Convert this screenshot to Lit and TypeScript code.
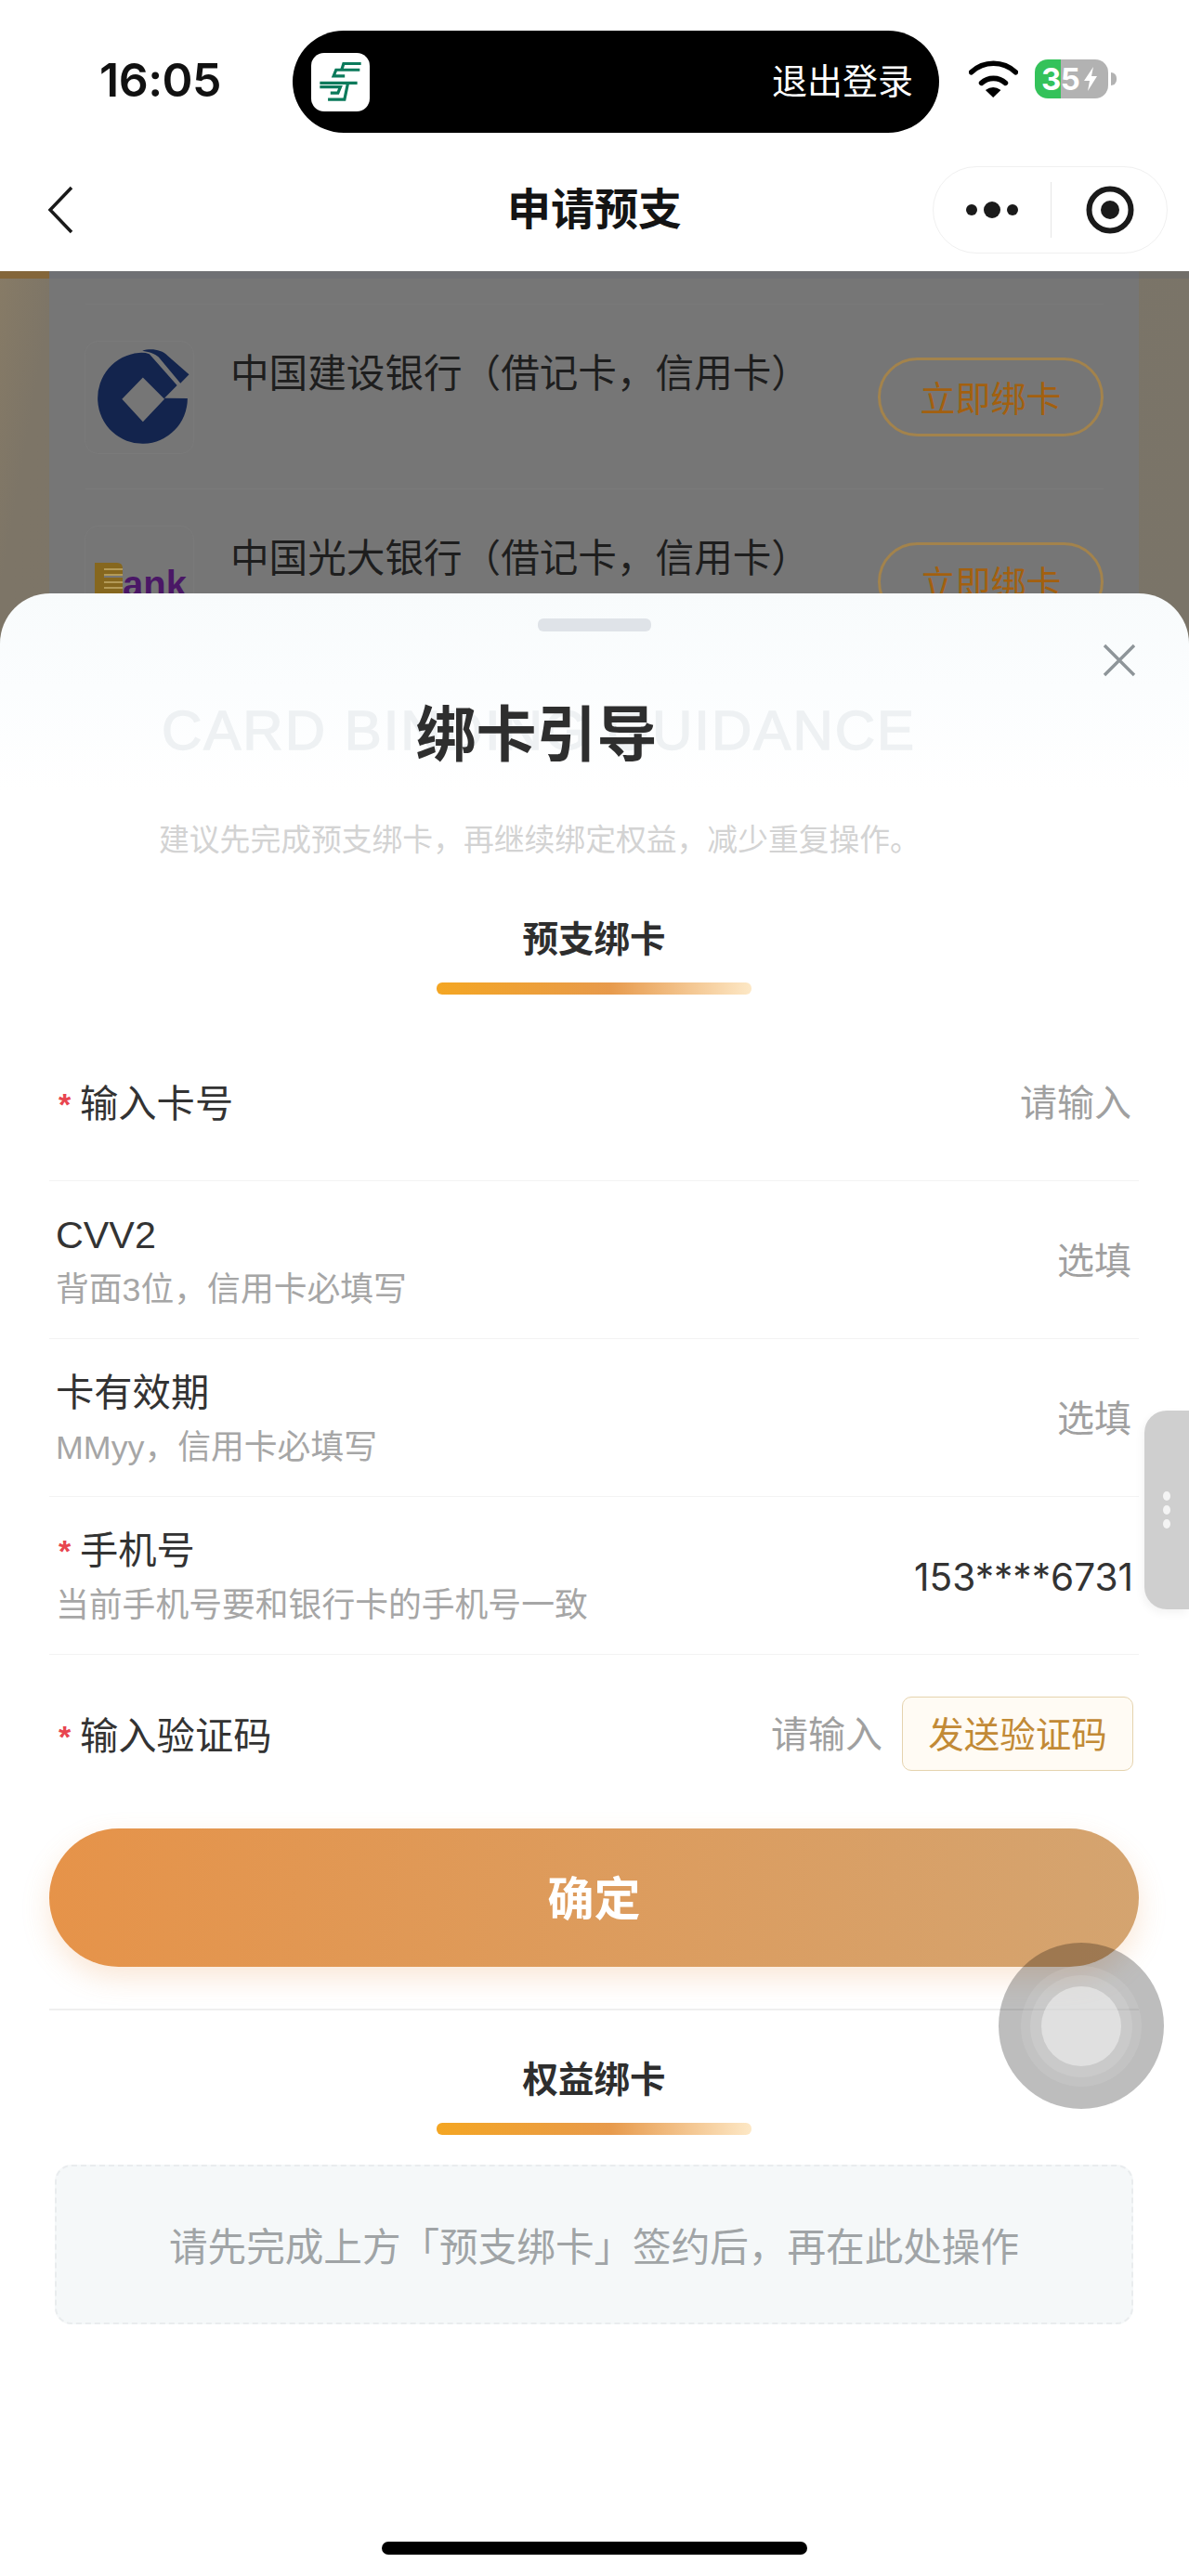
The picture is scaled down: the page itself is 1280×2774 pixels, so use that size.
import { LitElement, html, css, svg } from "lit";
import { customElement } from "lit/decorators.js";

const SANS = css`"Liberation Sans", "Noto Sans CJK SC", sans-serif`;

interface FormRow {
  label: string;
  hint?: string;
  required?: boolean;
  value: string;
  filled?: boolean;
  send?: boolean;
}

const ROWS: FormRow[] = [
  { label: "输入卡号", required: true, value: "请输入" },
  { label: "CVV2", hint: "背面3位，信用卡必填写", value: "选填" },
  { label: "卡有效期", hint: "MMyy，信用卡必填写", value: "选填" },
  { label: "手机号", hint: "当前手机号要和银行卡的手机号一致", required: true, value: "153****6731", filled: true },
  { label: "输入验证码", required: true, value: "请输入", send: true },
];

const ccbLogo = svg`<svg class="ccb" viewBox="125 100 310 320" aria-hidden="true">
  <path fill="#13244d" fill-rule="evenodd" d="M345 265 L420 266 A146 148 0 1 1 262 118 Q280 116 296 122 L386 224 Z M275 198 L207 268 L275 342 L345 268 Z"/>
  <path fill="#13244d" d="M273 111 C300 103 335 106 356 128 L425 188 L397 217 L326 132 C314 120 292 114 273 111 Z"/>
</svg>`;

const postLogo = svg`<svg class="post" viewBox="134 138 140 136" aria-hidden="true">
  <g fill="none" stroke="#0b7a5b" stroke-width="9.5">
    <path d="M270 148 H214 L208 167"/>
    <path d="M266 168 H190 L182 188 H218"/>
    <path d="M138 210 H258"/>
    <path d="M138 223 H204 L196 242 H172"/>
    <path d="M228 210 L217 263 H164"/>
  </g>
</svg>`;

@customElement("app-root")
export class AppRoot extends LitElement {
  static styles = css`
    :host {
      display: block;
      position: relative;
      width: 1280px;
      height: 2774px;
      overflow: hidden;
      background: #fff;
      font-family: ${SANS};
      color: #333;
    }
    .status {
      height: 160px;
      display: flex;
      box-sizing: border-box;
      padding: 33px 0 0 107px;
      background: #fff;
    }
    .time {
      width: 208px;
      height: 110px;
      line-height: 106px;
      font-family: Inter, "Liberation Sans", sans-serif;
      font-size: 50px;
      font-weight: 600;
      color: #111;
      letter-spacing: -0.5px;
    }
    .island {
      width: 696px;
      height: 110px;
      border-radius: 55px;
      background: #000;
      display: flex;
      align-items: center;
      box-sizing: border-box;
      padding: 0 28px 0 20px;
      justify-content: space-between;
    }
    .app-icon {
      width: 63px;
      height: 63px;
      border-radius: 14px;
      background: #fff;
      display: flex;
      align-items: center;
      justify-content: center;
    }
    .post { width: 47px; height: 46px; display: block; }
    .logout { color: #fff; font-size: 38px; line-height: 50px; }
    .wifi { width: 53px; height: 40px; margin: 32px 0 0 32px; display: block; }
    .battery {
      width: 79px;
      height: 42px;
      margin: 31px 0 0 18px;
      border-radius: 14px;
      background: linear-gradient(90deg, #34c25a 0 28px, #b2b2b2 28px);
      display: flex;
      align-items: center;
      box-sizing: border-box;
      padding-left: 7px;
      position: relative;
      color: #fff;
      font-family: Inter, "Liberation Sans", sans-serif;
      font-size: 33px;
      font-weight: 700;
      letter-spacing: -0.5px;
    }
    .bolt { width: 16px; height: 26px; margin-left: 4px; display: block; }
    .nub {
      width: 6px;
      height: 14px;
      margin: 45px 0 0 3px;
      border-radius: 0 6px 6px 0;
      background: #b2b2b2;
    }
    .nav {
      height: 132px;
      display: grid;
      grid-template-columns: 1fr auto 1fr;
      align-items: center;
      background: #fff;
    }
    .back { width: 28px; height: 52px; margin-left: 51px; display: block; }
    .nav-title { font-size: 47px; font-weight: 700; color: #141414; line-height: 60px; }
    .capsule {
      justify-self: end;
      margin-right: 23px;
      width: 253px;
      height: 94px;
      box-sizing: border-box;
      border: 1.5px solid #f0f0f0;
      border-radius: 47px;
      display: grid;
      grid-template-columns: 1fr 1fr;
      align-items: center;
      justify-items: center;
      position: relative;
    }
    .capsule-more { width: 56px; height: 20px; display: block; }
    .capsule-rec { width: 52px; height: 52px; display: block; margin-left: 4px; }
    .cap-div { position: absolute; left: 126px; top: 16px; width: 1px; height: 60px; background: #e6e6e6; }

    .backdrop {
      height: 420px;
      overflow: hidden;
      background: linear-gradient(100deg, #877b66 0, #7d7567 60px, #7a7468 100%);
      box-shadow: inset 0 1px 0 #999;
    }
    .bg-band { height: 8px; background: linear-gradient(90deg, #84663a 0 53px, #6f7074 53px 1226px, #716e69 1226px); }
    .bg-card {
      margin: 0 54px 0 53px;
      padding: 27px 38px 0 39px;
      background: #767676;
      height: 412px;
    }
    .bank {
      height: 200px;
      box-sizing: border-box;
      border-bottom: 1.5px solid #7b7b7b;
      display: flex;
      padding-top: 40px;
      align-items: flex-start;
    }
    .bank:first-child { border-top: 1.5px solid #797979; }
    .bank-logo {
      width: 116px;
      height: 120px;
      flex: none;
      margin-right: 40px;
      border-radius: 14px;
      box-shadow: 0 0 0 1px #7a7a7a;
      box-sizing: border-box;
    }
    .ccb { width: 103px; height: 106px; display: block; margin: 6px 0 0 12px; }
    .ebank {
      display: flex;
      align-items: flex-start;
      padding: 39px 0 0 10px;
      color: #4a1766;
      font-size: 40px;
      font-weight: 700;
      line-height: 46px;
    }
    .ebank svg { width: 30px; height: 46px; display: block; flex: none; }
    .bank-name { font-size: 41.6px; line-height: 70px; color: #1e1e1e; flex: 1; white-space: nowrap; }
    .bank-btn {
      width: 243px;
      height: 85px;
      margin-top: 17px;
      box-sizing: border-box;
      border: 3px solid #a3834c;
      border-radius: 43px;
      display: flex;
      align-items: center;
      justify-content: center;
      font-size: 38px;
      color: #a3600f;
      flex: none;
      padding-bottom: 3px;
    }

    .sheet {
      position: absolute;
      left: 0;
      right: 0;
      top: 639px;
      bottom: 0;
      border-radius: 54px 54px 0 0;
      background: linear-gradient(180deg, #f8fbfc 0, #fbfdfe 100px, #fff 212px) no-repeat #fff;
      background-size: 100% 212px;
      display: flex;
      flex-direction: column;
      box-sizing: border-box;
      padding: 27px 54px 0 53px;
    }
    .handle { width: 122px; height: 14px; border-radius: 6px; background: #dfe3e8; align-self: center; flex: none; }
    .close { position: absolute; top: 54px; right: 57px; width: 36px; height: 36px; display: block; }
    .head { position: relative; margin-top: 65px; height: 90px; display: flex; justify-content: center; }
    .watermark {
      position: absolute;
      left: 121px;
      top: 7px;
      font-family: "Liberation Sans", sans-serif;
      font-size: 60px;
      line-height: 70px;
      letter-spacing: 2px;
      color: #eef1f3;
      white-space: nowrap;
      font-weight: 400;
      -webkit-text-stroke: 1.4px #eef1f3;
    }
    .title { position: relative; font-size: 65px; line-height: 90px; padding-top: 2px; font-weight: 700; color: #2e2e2e; transform: translateX(-62px); }
    .subtitle { margin-top: 45px; line-height: 50px; font-size: 32.8px; color: #d3d3d3; padding-left: 118px; white-space: nowrap; }
    .sec-title { font-size: 38.5px; line-height: 50px; font-weight: 700; color: #2e2e2e; text-align: center; flex: none; }
    .sec-bar { width: 339px; height: 13px; border-radius: 6px; margin: 21px auto 0; flex: none; background: linear-gradient(90deg, #f4a623 0, #e79a4c 55%, #fde8c6 100%); }
    .rows { margin-top: 31px; }
    .row {
      height: 170px;
      box-sizing: border-box;
      border-bottom: 1.5px solid #f3f3f3;
      display: flex;
      align-items: center;
      justify-content: space-between;
      padding: 0 8px 0 7px;
    }
    .row:last-child { border-bottom: none; }
    .left { padding-top: 6px; }
    .label { font-size: 41.3px; line-height: 59px; color: #333; display: flex; align-items: center; white-space: nowrap; }
    .star { color: #e8454f; font-size: 34px; font-weight: 700; width: 26px; padding-left: 3px; box-sizing: border-box; line-height: 59px; height: 59px; flex: none; }
    .hint { font-size: 35.8px; line-height: 59px; color: #a6a6a6; white-space: nowrap; }
    .right { display: flex; align-items: center; padding-top: 3px; }
    .val { font-size: 40px; color: #a0a0a0; line-height: 59px; white-space: nowrap; }
    .val.filled { color: #333; font-family: Inter, "Liberation Sans", sans-serif; font-size: 40.6px; margin-right: -2px; }
    .send {
      width: 249px;
      height: 80px;
      margin: -3px -2px 0 21px;
      box-sizing: border-box;
      border: 1.5px solid #e5d3ae;
      border-radius: 10px;
      background: #fffbf4;
      color: #c28a36;
      font-size: 38.5px;
      padding-bottom: 5px;
      display: flex;
      align-items: center;
      justify-content: center;
      white-space: nowrap;
    }
    .confirm {
      margin-top: 17px;
      height: 149px;
      border-radius: 75px;
      flex: none;
      box-sizing: border-box;
      padding-bottom: 5px;
      background: linear-gradient(95deg, #e69349 0, #d4a470 100%);
      box-shadow: 0 12px 30px rgba(230, 147, 73, 0.22);
      display: flex;
      align-items: center;
      justify-content: center;
      color: #fff;
      font-size: 50px;
      font-weight: 700;
    }
    .split { margin-top: 45px; height: 1.5px; background: #efefef; flex: none; }
    .split + .sec-title { margin-top: 50px; }
    .notice {
      margin: 32px 6px 0;
      height: 172px;
      flex: none;
      box-sizing: border-box;
      border: 2px dashed #e9ecee;
      border-radius: 18px;
      background: #f5f8f9;
      display: flex;
      align-items: center;
      justify-content: center;
      font-size: 41.6px;
      color: #a0a4a6;
      white-space: nowrap;
    }
    .home { width: 458px; height: 14px; border-radius: 7px; background: #000; margin: 234px auto 0; flex: none; }
    .side {
      position: absolute;
      right: 0;
      top: 1519px;
      width: 48px;
      height: 214px;
      border-radius: 24px 0 0 24px;
      background: #cfcfcf;
      box-shadow: -2px 4px 10px rgba(0, 0, 0, 0.05);
      display: flex;
      flex-direction: column;
      align-items: center;
      justify-content: center;
      gap: 5px;
    }
    .side i { width: 8px; height: 10px; border-radius: 50%; background: #f4f4f4; display: block; }
    .ball {
      position: absolute;
      left: 1075px;
      top: 2092px;
      width: 178px;
      height: 179px;
      border-radius: 50%;
      background: rgba(0, 0, 0, 0.26);
      display: flex;
      align-items: center;
      justify-content: center;
    }
    .ring { border-radius: 50%; display: flex; align-items: center; justify-content: center; }
    .r1 { width: 130px; height: 130px; background: rgba(255, 255, 255, 0.1); }
    .r2 { width: 110px; height: 110px; background: rgba(255, 255, 255, 0.12); }
    .r3 { width: 86px; height: 86px; background: rgba(255, 255, 255, 0.42); }
  `;

  private renderRow(r: FormRow) {
    return html`<div class="row">
      <div class="left">
        <div class="label">${r.required ? html`<span class="star">*</span>` : ""}${r.label}</div>
        ${r.hint ? html`<div class="hint">${r.hint}</div>` : ""}
      </div>
      <div class="right">
        <span class="val ${r.filled ? "filled" : ""}">${r.value}</span>
        ${r.send ? html`<span class="send">发送验证码</span>` : ""}
      </div>
    </div>`;
  }

  render() {
    return html`
      <div class="status">
        <div class="time">16:05</div>
        <div class="island">
          <div class="app-icon">${postLogo}</div>
          <span class="logout">退出登录</span>
        </div>
        <svg class="wifi" viewBox="0 0 160 120" aria-hidden="true">
          <path d="M8 38 A105 105 0 0 1 152 38" fill="none" stroke="#000" stroke-width="17" stroke-linecap="round"/>
          <path d="M41 73 A58 58 0 0 1 119 73" fill="none" stroke="#000" stroke-width="17" stroke-linecap="round"/>
          <path d="M54 96 Q79 78 104 96 L79 120 Z" fill="#000"/>
        </svg>
        <div class="battery">35<svg class="bolt" viewBox="0 0 16 26" aria-hidden="true"><path d="M11 0 L1 15 H7 L5 26 L15 10 H9 Z" fill="#fff"/></svg></div>
        <div class="nub"></div>
      </div>
      <div class="nav">
        <svg class="back" viewBox="0 0 28 52" aria-hidden="true"><path d="M26 2 L3 26 L26 50" fill="none" stroke="#1a1a1a" stroke-width="3.5"/></svg>
        <div class="nav-title">申请预支</div>
        <div class="capsule">
          <svg class="capsule-more" viewBox="0 0 56 20" aria-hidden="true">
            <circle cx="6" cy="10" r="6" fill="#1a1a1a"/><circle cx="28" cy="10" r="9" fill="#1a1a1a"/><circle cx="50" cy="10" r="6" fill="#1a1a1a"/>
          </svg>
          <svg class="capsule-rec" viewBox="0 0 52 52" aria-hidden="true">
            <circle cx="26" cy="26" r="22.5" fill="none" stroke="#1a1a1a" stroke-width="6"/><circle cx="26" cy="26" r="10" fill="#1a1a1a"/>
          </svg>
          <div class="cap-div"></div>
        </div>
      </div>
      <div class="backdrop">
        <div class="bg-band"></div>
        <div class="bg-card">
          <div class="bank">
            <div class="bank-logo">${ccbLogo}</div>
            <div class="bank-name">中国建设银行（借记卡，信用卡）</div>
            <div class="bank-btn">立即绑卡</div>
          </div>
          <div class="bank">
            <div class="bank-logo ebank">
              <svg viewBox="0 0 30 46" aria-hidden="true">
                <path fill="#86671e" d="M0 0 H24 Q30 0 30 6 V14 H10 V16 H30 V46 H0 Z"/>
                <g fill="#b39a57"><rect x="10" y="6" width="20" height="2"/><rect x="10" y="12" width="20" height="2"/><rect x="10" y="20" width="20" height="2"/><rect x="10" y="26" width="20" height="2"/></g>
              </svg>ank
            </div>
            <div class="bank-name">中国光大银行（借记卡，信用卡）</div>
            <div class="bank-btn">立即绑卡</div>
          </div>
        </div>
      </div>

      <div class="sheet">
        <div class="handle"></div>
        <svg class="close" viewBox="0 0 36 36" aria-hidden="true"><path d="M2 2 L34 34 M34 2 L2 34" stroke="#8e9599" stroke-width="3.4" fill="none"/></svg>
        <div class="head">
          <div class="watermark">CARD BINDING GUIDANCE</div>
          <div class="title">绑卡引导</div>
        </div>
        <div class="subtitle">建议先完成预支绑卡，再继续绑定权益，减少重复操作。</div>
        <div class="sec-title" style="margin-top:57px">预支绑卡</div>
        <div class="sec-bar"></div>
        <div class="rows">${ROWS.map((r) => this.renderRow(r))}</div>
        <div class="confirm">确定</div>
        <div class="split"></div>
        <div class="sec-title">权益绑卡</div>
        <div class="sec-bar"></div>
        <div class="notice">请先完成上方「预支绑卡」签约后，再在此处操作</div>
        <div class="home"></div>
      </div>

      <div class="side"><i></i><i></i><i></i></div>
      <div class="ball">
        <div class="ring r1"><div class="ring r2"><div class="ring r3"></div></div></div>
      </div>
    `;
  }
}
